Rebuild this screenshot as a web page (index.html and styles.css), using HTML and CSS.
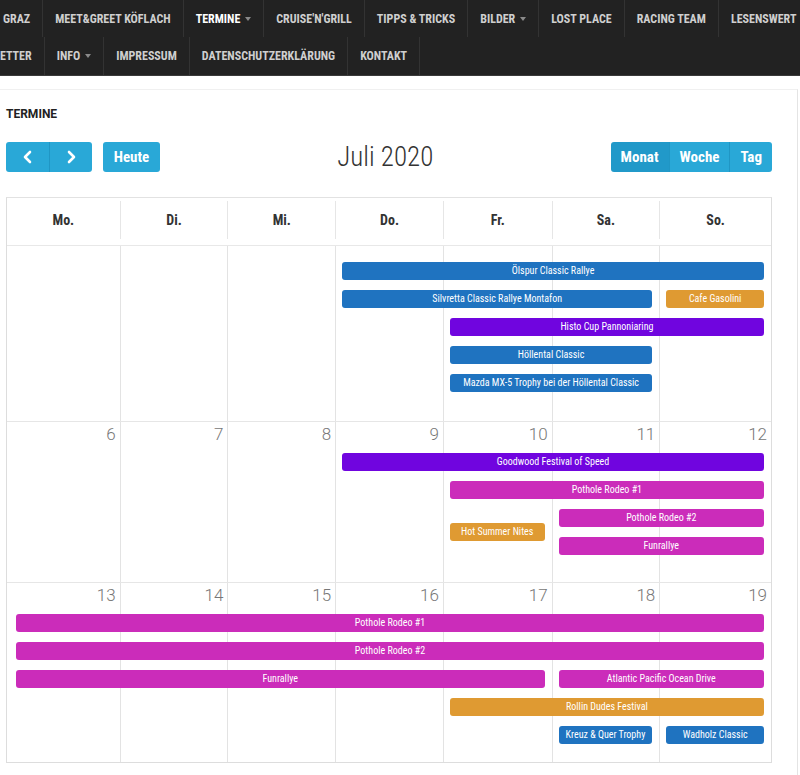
FILE: index.html
```html
<!DOCTYPE html>
<html lang="de">
  <head>
    <meta charset="UTF-8" />
    <meta name="viewport" content="width=device-width, initial-scale=1.0" />
    <title>Termine</title>
    <link rel="stylesheet" href="styles.css">
  </head>
  <body>
    <nav class="menu">
      <ul class="menu-row">
        <li class="menu-item first">GRAZ</li>
        <li class="menu-item">MEET&amp;GREET KÖFLACH</li>
        <li class="menu-item active has-sub">TERMINE</li>
        <li class="menu-item">CRUISE'N'GRILL</li>
        <li class="menu-item">TIPPS &amp; TRICKS</li>
        <li class="menu-item has-sub">BILDER</li>
        <li class="menu-item">LOST PLACE</li>
        <li class="menu-item">RACING TEAM</li>
        <li class="menu-item">LESENSWERT</li>
      </ul>
      <ul class="menu-row">
        <li class="menu-item first">ETTER</li>
        <li class="menu-item has-sub">INFO</li>
        <li class="menu-item">IMPRESSUM</li>
        <li class="menu-item">DATENSCHUTZERKLÄRUNG</li>
        <li class="menu-item">KONTAKT</li>
      </ul>
    </nav>

    <main class="content">
      <h2 class="page-title">TERMINE</h2>

      <div class="calendar">
        <div class="toolbar">
          <div class="toolbar-left">
            <div class="btn-group">
              <button class="btn">
                <svg width="10" height="14" viewBox="0 0 10 14"><polyline points="7,2 2,7 7,12" /></svg>
              </button>
              <button class="btn">
                <svg width="10" height="14" viewBox="0 0 10 14"><polyline points="3,2 8,7 3,12" /></svg>
              </button>
            </div>
            <button class="btn btn-today">Heute</button>
          </div>
          <h3 class="month-title">Juli 2020</h3>
          <div class="btn-group">
            <button class="btn active">Monat</button>
            <button class="btn">Woche</button>
            <button class="btn">Tag</button>
          </div>
        </div>

        <div class="grid">
          <div class="cal-head">
            <div class="head-cell">Mo.</div>
            <div class="head-cell">Di.</div>
            <div class="head-cell">Mi.</div>
            <div class="head-cell">Do.</div>
            <div class="head-cell">Fr.</div>
            <div class="head-cell">Sa.</div>
            <div class="head-cell">So.</div>
          </div>

          <div class="week week-first">
            <div class="day"></div>
            <div class="day"></div>
            <div class="day"></div>
            <div class="day"></div>
            <div class="day"></div>
            <div class="day"></div>
            <div class="day"></div>
            <div class="event blue" style="grid-column: 4 / span 4; grid-row: 2">Ölspur Classic Rallye</div>
            <div class="event blue" style="grid-column: 4 / span 3; grid-row: 3">Silvretta Classic Rallye Montafon</div>
            <div class="event orange" style="grid-column: 7 / span 1; grid-row: 3">Cafe Gasolini</div>
            <div class="event purple" style="grid-column: 5 / span 3; grid-row: 4">Histo Cup Pannoniaring</div>
            <div class="event blue" style="grid-column: 5 / span 2; grid-row: 5">Höllental Classic</div>
            <div class="event blue" style="grid-column: 5 / span 2; grid-row: 6">Mazda MX-5 Trophy bei der Höllental Classic</div>
          </div>

          <div class="week week-second">
            <div class="day"><span class="day-num">6</span></div>
            <div class="day"><span class="day-num">7</span></div>
            <div class="day"><span class="day-num">8</span></div>
            <div class="day"><span class="day-num">9</span></div>
            <div class="day"><span class="day-num">10</span></div>
            <div class="day"><span class="day-num">11</span></div>
            <div class="day"><span class="day-num">12</span></div>
            <div class="event purple" style="grid-column: 4 / span 4; grid-row: 2">Goodwood Festival of Speed</div>
            <div class="event pink" style="grid-column: 5 / span 3; grid-row: 3">Pothole Rodeo #1</div>
            <div class="event pink" style="grid-column: 6 / span 2; grid-row: 4">Pothole Rodeo #2</div>
            <div class="event orange middle" style="grid-column: 5 / span 1; grid-row: 4 / span 2">Hot Summer Nites</div>
            <div class="event pink" style="grid-column: 6 / span 2; grid-row: 5">Funrallye</div>
          </div>

          <div class="week week-third">
            <div class="day"><span class="day-num">13</span></div>
            <div class="day"><span class="day-num">14</span></div>
            <div class="day"><span class="day-num">15</span></div>
            <div class="day"><span class="day-num">16</span></div>
            <div class="day"><span class="day-num">17</span></div>
            <div class="day"><span class="day-num">18</span></div>
            <div class="day"><span class="day-num">19</span></div>
            <div class="event pink wide" style="grid-column: 1 / span 7; grid-row: 2">Pothole Rodeo #1</div>
            <div class="event pink wide" style="grid-column: 1 / span 7; grid-row: 3">Pothole Rodeo #2</div>
            <div class="event pink wide" style="grid-column: 1 / span 5; grid-row: 4">Funrallye</div>
            <div class="event pink" style="grid-column: 6 / span 2; grid-row: 4">Atlantic Pacific Ocean Drive</div>
            <div class="event orange" style="grid-column: 5 / span 3; grid-row: 5">Rollin Dudes Festival</div>
            <div class="event blue" style="grid-column: 6 / span 1; grid-row: 6">Kreuz &amp; Quer Trophy</div>
            <div class="event blue" style="grid-column: 7 / span 1; grid-row: 6">Wadholz Classic</div>
          </div>
        </div>
      </div>
    </main>
  </body>
</html>
```

FILE: styles.css
```css
* {
  margin: 0;
  padding: 0;
  box-sizing: border-box;
}

body {
  font-family: "Roboto Condensed", Roboto, "Liberation Sans", sans-serif;
  background: #fff;
  color: #333;
  width: 800px;
  overflow: hidden;
}

/* top menu */

.menu {
  background: #222;
  border-bottom: 1px solid #3a3a3a;
}

.menu-row {
  display: flex;
  list-style: none;
  height: 37px;
  white-space: nowrap;
  overflow: hidden;
}

.menu-row + .menu-row {
  height: 38px;
}

.menu-item {
  display: flex;
  align-items: center;
  flex-shrink: 0;
  padding: 0 12px;
  border-right: 1px solid #333;
  color: #cfcfcf;
  font-size: 12px;
  font-weight: 700;
}

.menu-item.first {
  padding-left: 3px;
}

.menu-row + .menu-row .menu-item.first {
  padding-left: 0;
}

.menu-item.active {
  color: #fff;
}

.has-sub::after {
  content: "";
  margin-left: 5px;
  border-left: 3.5px solid transparent;
  border-right: 3.5px solid transparent;
  border-top: 4px solid #8a8a8a;
}

/* page */

.content {
  margin-top: 13px;
  width: 798px;
  border-top: 1px solid #f0f0f0;
  border-right: 1px solid #e4e4e4;
  padding: 16px 25px 0 6px;
  height: 700px;
}

.page-title {
  font-family: Roboto, "Liberation Sans", sans-serif;
  font-size: 12px;
  font-weight: 700;
  color: #222;
  line-height: 16px;
}

/* calendar toolbar */

.toolbar {
  display: flex;
  align-items: center;
  justify-content: space-between;
  margin-top: 20px;
  height: 30px;
}

.toolbar-left {
  display: flex;
  gap: 11px;
}

.btn-group {
  display: flex;
}

.btn {
  height: 30px;
  padding: 0 10px;
  border: none;
  background: #29a8d7;
  color: #fff;
  font-family: inherit;
  font-size: 15px;
  font-weight: 700;
  border-radius: 3px;
  display: flex;
  align-items: center;
  justify-content: center;
}

.btn svg {
  fill: none;
  stroke: #fff;
  stroke-width: 2.6;
  stroke-linecap: round;
  stroke-linejoin: round;
}

.btn-group .btn {
  border-radius: 0;
}

.btn-group .btn + .btn {
  border-left: 1px solid #2096c4;
}

.btn-group .btn:first-child {
  border-radius: 3px 0 0 3px;
}

.btn-group .btn:last-child {
  border-radius: 0 3px 3px 0;
}

.toolbar-left .btn-group .btn {
  width: 43px;
}

.btn-today {
  width: 57px;
}

.btn.active {
  background: #2199c9;
}

.month-title {
  font-size: 27px;
  font-weight: 300;
  color: #333;
}

/* month grid */

.grid {
  margin-top: 25px;
  width: 766px;
  border: 1px solid #ddd;
  border-top-color: #e2e2e2;
}

.cal-head,
.week {
  display: grid;
  grid-template-columns:
    minmax(0, 113fr) minmax(0, 108fr) minmax(0, 108fr) minmax(0, 108fr)
    minmax(0, 109fr) minmax(0, 108fr) minmax(0, 112fr);
}

.cal-head {
  height: 48px;
  border-bottom: 1px solid #e8e8e8;
}

.head-cell {
  display: flex;
  align-items: center;
  justify-content: center;
  margin: 3px 0 6px;
  border-left: 1px solid #e6e6e6;
  font-size: 14px;
  font-weight: 700;
  color: #333;
}

.head-cell:first-child {
  border-left: none;
}

.week {
  row-gap: 10px;
  border-top: 1px solid #e6e6e6;
}

.cal-head + .week {
  border-top: none;
}

.week-first {
  grid-template-rows: 6px repeat(5, 18px) 1fr;
  height: 175px;
}

.week-second {
  grid-template-rows: 21px repeat(4, 18px) 1fr;
  height: 161px;
}

.week-third {
  grid-template-rows: 21px repeat(5, 18px) 1fr;
  height: 180px;
}

/* each day cell fills its whole column, the events sit on top of it */
.day {
  grid-row: 1 / -1;
  border-left: 1px solid #e3e3e3;
  text-align: right;
  padding: 3px 4px 0 0;
}

.day:nth-child(1) { grid-column: 1; border-left: none; }
.day:nth-child(2) { grid-column: 2; }
.day:nth-child(3) { grid-column: 3; }
.day:nth-child(4) { grid-column: 4; }
.day:nth-child(5) { grid-column: 5; }
.day:nth-child(6) { grid-column: 6; }
.day:nth-child(7) { grid-column: 7; }

.day-num {
  font-family: Roboto, "Liberation Sans", sans-serif;
  font-size: 17px;
  font-weight: 300;
  color: #777;
  line-height: 18px;
}

.event {
  height: 18px;
  margin: 0 7px;
  border-radius: 3px;
  color: #fff;
  font-size: 10px;
  line-height: 18px;
  text-align: center;
  white-space: nowrap;
  overflow: hidden;
}

.event.middle {
  align-self: center;
}

.event.wide {
  margin-left: 9px;
}

.blue {
  background: #1f73c0;
}

.orange {
  background: #df9a32;
}

.purple {
  background: #7005df;
}

.pink {
  background: #cb2cba;
}
```
